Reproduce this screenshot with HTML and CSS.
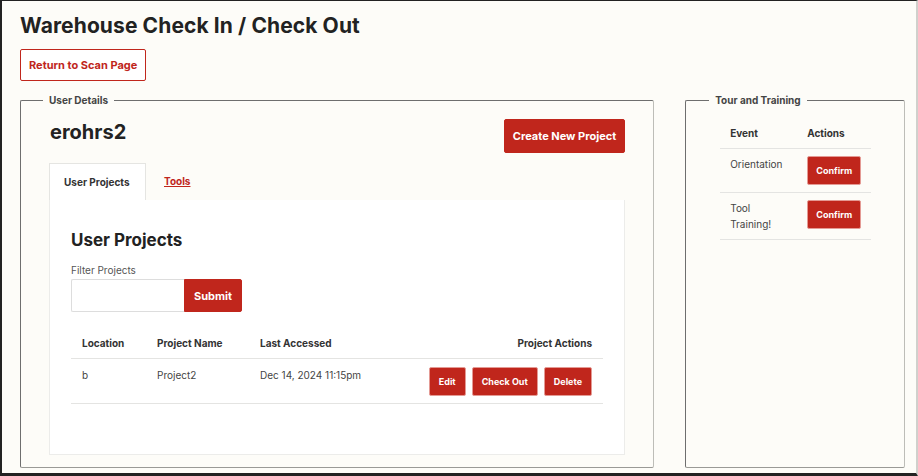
FILE: index.html
```html
<!DOCTYPE html>
<html>
<head>
<meta charset="utf-8">
<link rel="stylesheet" href="styles.css">
</head>
<body>
<div class="page">
  <h1 class="title">Warehouse Check In / Check Out</h1>
  <button class="btn-outline">Return to Scan Page</button>
  <div class="columns">
    <fieldset class="box box-main">
      <legend>User Details</legend>
      <div class="user-head">
        <h2 class="username">erohrs2</h2>
        <button class="btn btn-lg">Create New Project</button>
      </div>
      <div class="tabs">
        <div class="tab active">User Projects</div>
        <a class="tab link" href="#">Tools</a>
      </div>
      <div class="panel">
        <h3 class="panel-title">User Projects</h3>
        <label class="filter-label">Filter Projects</label>
        <div class="filter">
          <input class="filter-input" type="text">
          <button class="btn btn-submit">Submit</button>
        </div>
        <table class="ptable">
          <thead>
            <tr><th>Location</th><th>Project Name</th><th>Last Accessed</th><th class="right">Project Actions</th></tr>
          </thead>
          <tbody>
            <tr>
              <td>b</td><td>Project2</td><td>Dec 14, 2024 11:15pm</td>
              <td class="right"><div class="actions"><button class="btn btn-sm">Edit</button><button class="btn btn-sm">Check Out</button><button class="btn btn-sm">Delete</button></div></td>
            </tr>
          </tbody>
        </table>
      </div>
    </fieldset>
    <fieldset class="box box-side">
      <legend>Tour and Training</legend>
      <table class="ttable">
        <thead><tr><th>Event</th><th>Actions</th></tr></thead>
        <tbody>
          <tr><td>Orientation</td><td><button class="btn btn-sm btn-confirm">Confirm</button></td></tr>
          <tr><td>Tool<br>Training!</td><td><button class="btn btn-sm btn-confirm">Confirm</button></td></tr>
        </tbody>
      </table>
    </fieldset>
  </div>
</div>
</body>
</html>
```
FILE: styles.css
```css
* { box-sizing: border-box; }
html, body { margin: 0; padding: 0; }
body {
  width: 918px;
  height: 476px;
  overflow: hidden;
  background: #fdfcf8;
  border-top: 1px solid #222;
  border-left: 2px solid #222;
  border-bottom: 3px solid #222;
  border-right: 2px solid #d0d0cc;
  font-family: "Inter", "Liberation Sans", sans-serif;
  color: #3a3a3a;
}
.page {
  padding: 11px 11px 0 18px;
}
.title {
  margin: 0;
  font-size: 21px;
  line-height: 28px;
  font-weight: 700;
  color: #222;
  letter-spacing: 0.1px;
}
.btn-outline {
  margin-top: 9px;
  height: 32px;
  padding: 0 8px;
  border: 1px solid #c0261c;
  border-radius: 2px;
  background: #fff;
  color: #c0261c;
  font-family: inherit;
  font-size: 11px;
  font-weight: 700;
}
.columns {
  display: flex;
  gap: 31px;
  margin-top: 13px;
  height: 374px;
}
.box {
  margin: 0;
  border: 1px solid #6e6e6e;
  border-right-color: #bdbdb8;
  border-bottom-color: #9a9a96;
  border-radius: 2px;
  padding: 0;
  min-width: 0;
}
.box legend {
  padding: 0 6px;
  font-size: 10px;
  font-weight: 700;
  color: #444;
  line-height: 12px;
}
.box-main {
  width: 635px;
  padding: 13px 28px 0 28px;
}
.box-main legend { margin-left: -6px; }
.box-side {
  width: 220px;
  padding: 14px 33px 0 34px;
}
.box-side legend { margin-left: -11px; }
.user-head {
  display: flex;
  justify-content: space-between;
  align-items: flex-start;
}
.username {
  margin: 1px 0 0 1px;
  font-size: 20px;
  line-height: 24px;
  font-weight: 700;
  color: #222;
}
.btn {
  background: #c0261c;
  color: #fff;
  border: 1px solid #c0261c;
  border-radius: 2px;
  font-family: inherit;
  font-weight: 700;
  cursor: pointer;
}
.btn-lg {
  height: 34px;
  padding: 0 8px;
  font-size: 11px;
}
.tabs {
  display: flex;
  margin-top: 10px;
  align-items: flex-end;
}
.tab {
  height: 37px;
  line-height: 37px;
  font-size: 10px;
  font-weight: 700;
  padding: 0 14px;
}
.tab.active {
  background: #fff;
  border: 1px solid #e5e5e2;
  border-bottom: none;
  color: #333;
  width: 97px;
}
.tab.link {
  color: #c0261c;
  text-decoration: underline;
  padding-left: 18px;
}
.panel {
  background: #fff;
  border: 1px solid #ececea;
  border-top: none;
  height: 255px;
  padding: 30px 21px 0 21px;
}
.panel-title {
  margin: 0;
  font-size: 17px;
  line-height: 20px;
  font-weight: 700;
  color: #222;
}
.filter-label {
  display: block;
  margin-top: 14px;
  font-size: 10px;
  line-height: 12px;
  color: #555;
}
.filter {
  display: flex;
  margin-top: 3px;
}
.filter-input {
  width: 113px;
  height: 33px;
  border: 1px solid #ddd;
  border-right: none;
  border-radius: 2px 0 0 2px;
  margin: 0;
}
.btn-submit {
  width: 58px;
  height: 33px;
  border-radius: 0 2px 2px 0;
  font-size: 11px;
}
.ptable {
  width: 532px;
  margin-top: 17px;
  border-collapse: collapse;
  font-size: 10px;
}
.ptable th {
  text-align: left;
  font-weight: 700;
  color: #333;
  padding: 8px 11px 9px 11px;
  border-bottom: 1px solid #e4e4e2;
}
.ptable td {
  vertical-align: top;
  padding: 10px 11px 0 11px;
  height: 45px;
  border-bottom: 1px solid #e4e4e2;
  color: #444;
}
.ptable th:nth-child(1), .ptable td:nth-child(1) { width: 75px; }
.ptable th:nth-child(2), .ptable td:nth-child(2) { width: 103px; }
.ptable .right { text-align: right; }
.ptable td.right { padding-top: 8px; }
.actions {
  display: flex;
  justify-content: flex-end;
  gap: 6px;
}
.btn-sm {
  height: 29px;
  padding: 0 9px;
  font-size: 9px;
  border-color: #e49a94;
}
.ttable {
  width: 151px;
  border-collapse: collapse;
  font-size: 10px;
}
.ttable th {
  text-align: left;
  font-weight: 700;
  color: #333;
  padding: 7px 10px 9px 10px;
  border-bottom: 1px solid #e4e4e2;
}
.ttable td {
  vertical-align: top;
  padding: 7px 10px 7px 10px;
  border-bottom: 1px solid #e4e4e2;
  color: #444;
  line-height: 16px;
}
.ttable th:first-child, .ttable td:first-child { width: 87px; }
.ttable td:last-child { padding-left: 0; }
.ttable th:last-child { padding-left: 0; }
.btn-confirm {
  width: 54px;
  padding: 0;
  height: 29px;
}
```
